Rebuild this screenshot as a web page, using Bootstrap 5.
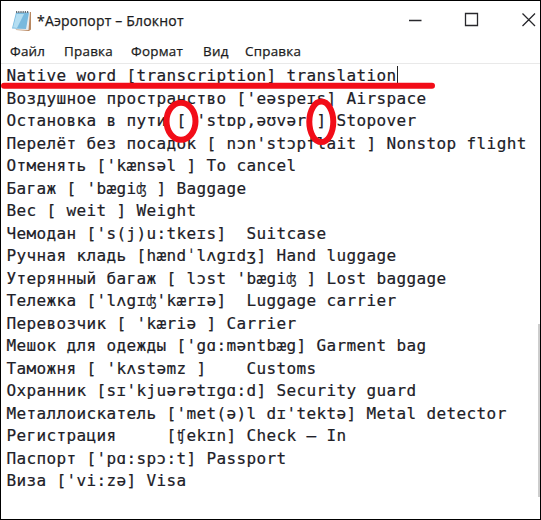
<!DOCTYPE html>
<html lang="ru">
<head>
<meta charset="utf-8">
<meta name="viewport" content="width=device-width, initial-scale=1">
<title>Аэропорт – Блокнот</title>
<link href="https://cdn.jsdelivr.net/npm/bootstrap@5.3.0/dist/css/bootstrap.min.css" rel="stylesheet">
<style>
  html, body { height: 100%; overflow: hidden; }
  .np-window { width: 541px; height: 520px; border: 1px solid #000; background: #fff; color: #1b1b20; font-family: "Open Sans", "Noto Sans", sans-serif; }
  .np-title { height: 39px; padding: 0 0 0 10px; font-size: 14px; }
  .np-caption { margin-left: 5px; letter-spacing: .19px; -webkit-text-stroke: .25px #1b1b20; white-space: nowrap; }
  .np-menu { height: 23px; padding-left: 9px; font-size: 13.4px; line-height: 23px; letter-spacing: .25px; -webkit-text-stroke: .25px #1b1b20; }
  .np-menu span { flex: none; white-space: nowrap; }
  .m1 { width: 54px; } .m2 { width: 67px; } .m3 { width: 72px; } .m4 { width: 42px; }
  .np-body { border-top: 1px solid #e9e9e9; padding-top: 1.4px; }
  .np-text { margin: 0; padding: 0 0 0 5.4px; flex: 1; overflow: hidden; color: #202027; font-family: "DejaVu Sans Mono", monospace; font-size: 16px; line-height: 22.5px; letter-spacing: .372px; -webkit-text-stroke: .2px #202027; }
  .np-caret { display: inline-block; width: 1px; height: 18px; margin-right: -1px; vertical-align: -3px; background: #222; }
  .np-scroll { width: 2px; height: 431px; padding-top: 259px; }
  .np-thumb { height: 173px; background: #cdcdcd; }
  .np-marks { left: -1px; top: -1px; pointer-events: none; }
</style>
<script src="https://cdn.jsdelivr.net/npm/bootstrap@5.3.0/dist/js/bootstrap.bundle.min.js"></script>
</head>
<body>
<main class="np-window position-relative d-flex flex-column overflow-hidden">
  <header class="np-title d-flex align-items-center">
    <svg width="21" height="22" viewBox="0 0 21 22" aria-hidden="true">
      <path d="M6 2.5 20 2 20 19.5 18 21 5 20z" fill="#b88760"/>
      <path d="M5.5 2.5 19 2 17.5 20 4 19.5z" fill="#e8edf0"/>
      <path d="M5 2.5 18 2.5 15 19 1 18.5z" fill="#78b9de"/>
      <path d="M5.5 4 13 4 6 18 2 17.5z" fill="#b4def2"/>
      <path d="M5 2H18" stroke="#65717a" stroke-width="2" stroke-dasharray="1.2 1"/>
    </svg>
    <span class="np-caption">*Аэропорт – Блокнот</span>
    <svg class="ms-auto" width="132" height="38" viewBox="0 0 132 38" fill="none" stroke="#28282c" stroke-width="1.3" aria-label="Управление окном">
      <path d="M1 18.5H13.500M57.500 11.500H69.500V23.500H57.500zM114.500 11.500 127 24M127 11.500 114.500 24"/>
    </svg>
  </header>
  <nav class="np-menu d-flex"><span class="m1">Файл</span><span class="m2">Правка</span><span class="m3">Формат</span><span class="m4">Вид</span><span>Справка</span></nav>
  <section class="np-body d-flex flex-grow-1">
<pre class="np-text">Native word [transcription] translation<i class="np-caret"></i>
Воздушное пространство ['eəspeɪs] Airspace
Остановка в пути [ 'stɒp,əʊvər ] Stopover
Перелёт без посадок [ nɔn'stɔpflait ] Nonstop flight
Отменять ['kænsəl ] To cancel
Багаж [ 'bægiʤ ] Baggage
Вес [ weit ] Weight
Чемодан ['s(j)u:tkeɪs]  Suitcase
Ручная кладь [hændˈlʌgɪdʒ] Hand luggage
Утерянный багаж [ lɔst 'bægiʤ ] Lost baggage
Тележка ['lʌgɪʤ'kærɪə]  Luggage carrier
Перевозчик [ 'kæriə ] Carrier
Мешок для одежды ['gɑ:məntbæg] Garment bag
Таможня [ 'kʌstəmz ]    Customs
Охранник [sɪ'kjuərətɪgɑ:d] Security guard
Металлоискатель ['met(ə)l dɪ'tektə] Metal detector
Регистрация     [ʧekɪn] Check – In
Паспорт ['pɑ:spɔ:t] Passport
Виза ['vi:zə] Visa</pre>
    <div class="np-scroll"><div class="np-thumb"></div></div>
  </section>
  <svg class="np-marks position-absolute" width="541" height="520" viewBox="0 0 541 520" fill="none" stroke="#f20d18" stroke-width="6" stroke-linecap="round" aria-hidden="true">
    <path d="M4 85.800H432"/>
    <ellipse cx="181" cy="121.200" rx="14.500" ry="18.500"/>
    <ellipse cx="321.300" cy="121.800" rx="12" ry="20.300"/>
  </svg>
</main>
</body>
</html>
